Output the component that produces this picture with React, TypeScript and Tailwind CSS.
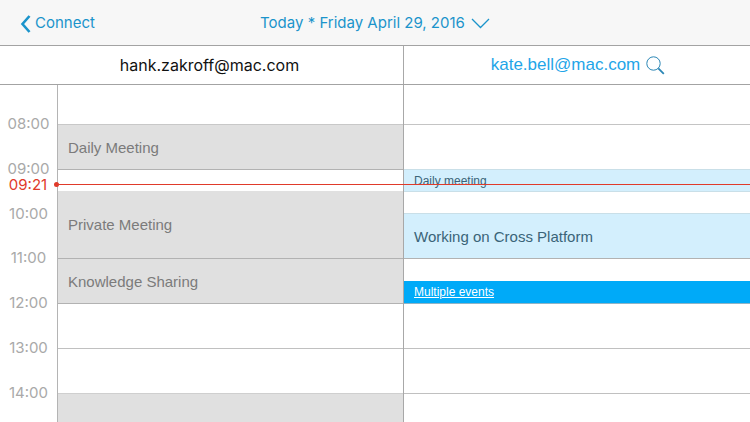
import { clsx } from "clsx";

type Slot = {
  height: string;
  kind: "free" | "busy" | "open" | "multiple";
  line?: string;
  title?: string;
  small?: boolean;
};

const hours = [
  { time: "08:00", height: "h-[45px]" },
  { time: "09:00", height: "h-[45px]" },
  { time: "10:00", height: "h-[44px]" },
  { time: "11:00", height: "h-[45px]" },
  { time: "12:00", height: "h-[45px]" },
  { time: "13:00", height: "h-[45px]" },
  { time: "14:00", height: "h-[45px]" },
];

const hankSlots: Slot[] = [
  { height: "h-10", kind: "free", line: "border-b border-[#c8c8c8]" },
  { height: "h-[45px]", kind: "busy", line: "border-b border-[#b2b2b2]", title: "Daily Meeting" },
  { height: "h-[21px]", kind: "free" },
  { height: "h-[68px]", kind: "busy", line: "border-b border-[#b2b2b2]", title: "Private Meeting" },
  { height: "h-[45px]", kind: "busy", line: "border-b border-[#b2b2b2]", title: "Knowledge Sharing" },
  { height: "h-[45px]", kind: "free", line: "border-b border-[#c0c0c0]" },
  { height: "h-11", kind: "free" },
  { height: "h-[45px]", kind: "busy", line: "border-t border-[#cfcfcf]" },
];

const kateSlots: Slot[] = [
  { height: "h-10", kind: "free", line: "border-b border-[#c4c4c4]" },
  { height: "h-11", kind: "free" },
  { height: "h-[23px]", kind: "open", line: "border-y border-[#c9dfe8]", title: "Daily meeting", small: true },
  { height: "h-[21px]", kind: "free" },
  { height: "h-[46px]", kind: "open", line: "border-t border-b border-t-[#c9dfe8] border-b-[#b2b2b2]", title: "Working on Cross Platform" },
  { height: "h-[22px]", kind: "free" },
  { height: "h-[23px]", kind: "multiple", line: "border-b border-[#8fb4c6]", title: "Multiple events", small: true },
  { height: "h-[45px]", kind: "free", line: "border-b border-[#c0c0c0]" },
  { height: "h-[45px]", kind: "free", line: "border-b border-[#c0c0c0]" },
  { height: "h-11", kind: "free" },
];

const kindStyles = {
  free: "bg-white",
  busy: "bg-[#e0e0e0] text-[#7b7b7b]",
  open: "bg-[#d3effd] text-[#3a6478]",
  multiple: "bg-[#00aaf8] text-white",
};

function Calendar({ label, slots, className }: { label: string; slots: Slot[]; className?: string }) {
  return (
    <section aria-label={label} className={clsx("flex min-w-0 flex-col font-['Liberation_Sans',Arial,sans-serif]", className)}>
      {slots.map((slot, i) => (
        <div
          key={i}
          className={clsx(
            "flex shrink-0 items-center px-2.5",
            slot.height,
            slot.line,
            kindStyles[slot.kind],
            slot.small ? "text-xs" : "pt-0.5 text-[15px]",
          )}
        >
          {slot.kind === "multiple" ? (
            <a href="#events" className="underline">{slot.title}</a>
          ) : (
            slot.title
          )}
        </div>
      ))}
    </section>
  );
}

export default function App() {
  return (
    <div className="h-screen overflow-hidden bg-white font-[Inter,sans-serif]">
      <header className="grid h-[46px] grid-cols-[1fr_auto_1fr] items-center border-b border-[#a3a3a3] bg-[#f7f7f7] pt-0.5 text-[15px] text-[#1b94cb]">
        <button type="button" className="flex items-center gap-1 justify-self-start pl-5">
          <svg width="11" height="18" viewBox="0 0 11 18" fill="none" stroke="currentColor" strokeWidth="2.6" aria-hidden="true">
            <path d="M9.5 1 2.5 9l7 8" />
          </svg>
          Connect
        </button>
        <button type="button" className="flex items-center gap-1.5">
          Today * Friday April 29, 2016
          <svg width="19" height="11" viewBox="0 0 19 11" fill="none" stroke="currentColor" strokeWidth="1.3" aria-hidden="true">
            <path d="M1 1l8.500 8.500L18 1" />
          </svg>
        </button>
      </header>

      <div className="grid h-[39px] grid-cols-[58px_1fr_1fr] border-b border-[#a3a3a3]">
        <h2 className="col-span-2 flex items-center justify-center border-r border-[#a8a8a8] pl-4 text-base text-[#111]">
          hank.zakroff@mac.com
        </h2>
        <button type="button" className="flex items-center justify-center gap-1.5 pl-0.5 font-['Liberation_Sans',Arial,sans-serif] text-[17px] text-[#1fa5e8]">
          kate.bell@mac.com
          <svg width="19" height="19" viewBox="0 0 19 19" fill="none" stroke="#2a86b5" aria-hidden="true">
            <circle cx="7.500" cy="7.500" r="6.700" strokeWidth="1" />
            <path d="M12.300 12.300l5.500 5.500" strokeWidth="1.800" />
          </svg>
        </button>
      </div>

      <main className="relative grid grid-cols-[58px_1fr_1fr]">
        <ol className="border-r border-[#b4b4b4] pt-4 text-center text-[15px] leading-none text-[#a9a9a9]">
          {hours.map(({ time, height }) => (
            <li key={time} className={clsx("flex items-center justify-center", height)}>
              <time>{time}</time>
            </li>
          ))}
        </ol>
        <Calendar label="hank.zakroff@mac.com" slots={hankSlots} className="border-r border-[#a8a8a8]" />
        <Calendar label="kate.bell@mac.com" slots={kateSlots} />

        <div className="absolute inset-x-0 top-[92px] flex h-[15px] items-center text-[15px] leading-none text-[#e03a2a]">
          <time className="w-[54px] pl-0.5 text-center">09:21</time>
          <span className="size-[5px] rounded-full bg-[#e03a2a]" />
          <span className="h-px flex-1 bg-[#e03a2a]" />
        </div>
      </main>
    </div>
  );
}
